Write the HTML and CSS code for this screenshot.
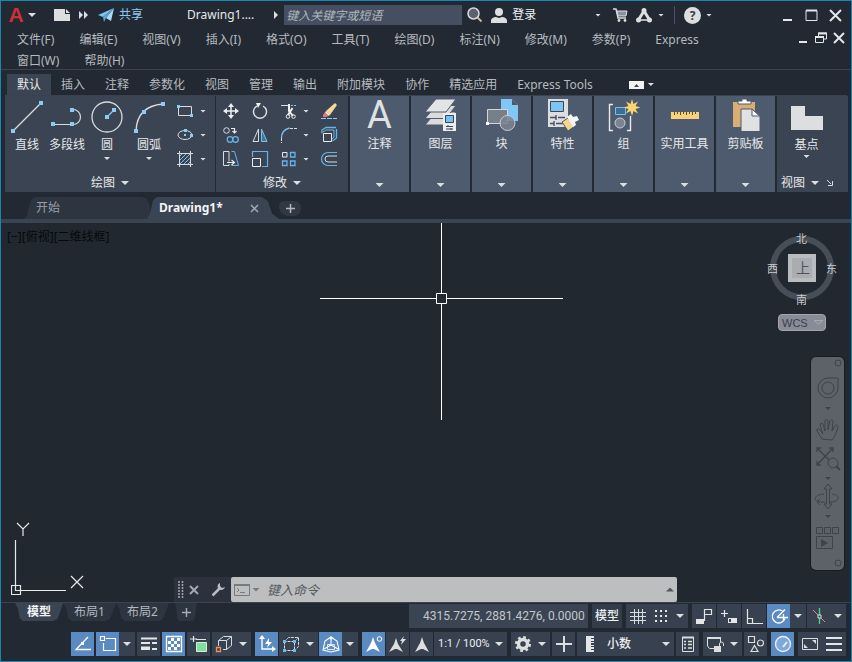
FILE: index.html
```html
<!DOCTYPE html>
<html lang="zh-CN">
<head>
<meta charset="utf-8">
<title>Drawing1</title>
<link rel="stylesheet" href="styles.css">
</head>
<body>
<div class="app">
  <header class="titlebar">
    <button class="logo" aria-label="应用程序">A</button>
    <i class="caret"></i>
    <button class="icon-btn new-doc" aria-label="新建"><svg width="16" height="12" viewBox="0 0 16 12"><path fill="#dcdee0" d="M0 0h11v5h5v7H0z"/><path fill="#dcdee0" d="M12 0l4 4h-4z"/></svg></button>
    <button class="icon-btn more" aria-label="更多"><svg width="10" height="8" viewBox="0 0 10 8"><path fill="#dcdee0" d="M0 0l4 4-4 4zM5 0l4 4-4 4z"/></svg></button>
    <button class="share"><svg width="17" height="14" viewBox="0 0 17 14"><path fill="#7cc3f2" d="M0 7L16 0 5 9z"/><path fill="#a9dbfb" d="M16 0l-3 13-5-3z"/><path fill="#5aa6dc" d="M5 9L16 0 8 10l-2 4z"/></svg>共享</button>
    <h1 class="doc-title">Drawing1....</h1>
    <svg class="title-arrow" width="5" height="8" viewBox="0 0 5 8"><path fill="#dcdee0" d="M0 0l4 4-4 4z"/></svg>
    <input class="search" type="text" aria-label="搜索" placeholder="键入关键字或短语">
    <button class="icon-btn lens" aria-label="搜索"><svg width="16" height="16" viewBox="0 0 16 16"><circle cx="6.500" cy="6.500" r="5.500" fill="#5b626c" stroke="#d8dadc" stroke-width="1.500"/><path d="M10.500 10.500l4 4" stroke="#c9b79c" stroke-width="2"/></svg></button>
    <button class="login"><svg width="16" height="15" viewBox="0 0 16 15"><circle cx="8" cy="4" r="4" fill="#dcdee0"/><path fill="#dcdee0" d="M0 15v-2c0-3 3-4 5-4l3 1 3-1c2 0 5 1 5 4v2z"/></svg>登录</button>
    <span class="spacer"></span>
    <i class="caret small"></i>
    <button class="icon-btn cart" aria-label="商店"><svg width="15" height="14" viewBox="0 0 15 14"><path d="M0 1h3l2 9h8" fill="none" stroke="#dcdee0" stroke-width="1.400"/><path fill="#8d9298" stroke="#dcdee0" d="M4 3h10l-1 5H5z"/><circle cx="6" cy="12.500" r="1.400" fill="#dcdee0"/><circle cx="12" cy="12.500" r="1.400" fill="#dcdee0"/></svg></button>
    <button class="icon-btn desk" aria-label="应用商店"><svg width="16" height="15" viewBox="0 0 16 15"><path d="M3 11L8 3l5 8" fill="none" stroke="#dcdee0" stroke-width="3"/><path d="M3 12h10" stroke="#dcdee0" stroke-width="1.500"/><circle cx="8" cy="2.500" r="2.500" fill="#dcdee0"/><circle cx="2.500" cy="12" r="2.500" fill="#dcdee0"/><circle cx="13.500" cy="12" r="2.500" fill="#dcdee0"/></svg></button>
    <i class="caret small"></i>
    <i class="divider"></i>
    <button class="help" aria-label="帮助">?</button>
    <i class="caret small"></i>
    <div class="win-controls">
      <button aria-label="最小化"><svg width="13" height="13" viewBox="0 0 13 13"><path d="M2 11h9" stroke="#e4e6e8" stroke-width="2"/></svg></button>
      <button aria-label="最大化"><svg width="13" height="13" viewBox="0 0 13 13"><path d="M1 1.500h11v10H1z" fill="none" stroke="#e4e6e8"/><path d="M1 1.500h11" stroke="#e4e6e8" stroke-width="2"/></svg></button>
      <button aria-label="关闭"><svg width="13" height="13" viewBox="0 0 13 13"><path d="M1 1l11 11M12 1L1 12" stroke="#e4e6e8" stroke-width="2"/></svg></button>
    </div>
  </header>

  <nav class="menubar" aria-label="菜单">
    <div class="menus">
      <div class="menu-row"><a href="#">文件(F)</a><a href="#">编辑(E)</a><a href="#">视图(V)</a><a href="#">插入(I)</a><a href="#">格式(O)</a><a href="#">工具(T)</a><a href="#">绘图(D)</a><a href="#">标注(N)</a><a href="#">修改(M)</a><a href="#">参数(P)</a><a href="#">Express</a></div>
      <div class="menu-row"><a href="#">窗口(W)</a><a href="#">帮助(H)</a></div>
    </div>
    <div class="doc-controls">
      <button aria-label="最小化图形"><svg width="12" height="12" viewBox="0 0 12 12"><path d="M2 10h8" stroke="#e4e6e8" stroke-width="2"/></svg></button>
      <button aria-label="还原图形"><svg width="12" height="12" viewBox="0 0 12 12"><path d="M3.500 4V1h8v6H9M.500 4.500h8v6h-8z" fill="none" stroke="#e4e6e8"/><path d="M3 1.500h9M0 5h9" stroke="#e4e6e8" stroke-width="2"/></svg></button>
      <button aria-label="关闭图形"><svg width="12" height="12" viewBox="0 0 12 12"><path d="M1 1l10 10M11 1L1 11" stroke="#e4e6e8" stroke-width="2"/></svg></button>
    </div>
  </nav>

  <nav class="ribbon-tabs" aria-label="功能区">
    <button class="on">默认</button><button>插入</button><button>注释</button><button>参数化</button><button>视图</button><button>管理</button><button>输出</button><button>附加模块</button><button>协作</button><button>精选应用</button><button>Express Tools</button>
    <button class="collapse" aria-label="最小化功能区"><svg width="15" height="8" viewBox="0 0 15 8"><path fill="#f2f2f2" d="M0 0h15v8H0z"/><path fill="#3b4453" d="M5 6l2.500-3L10 6z"/></svg><i class="caret small"></i></button>
  </nav>

  <section class="ribbon">
    <div class="panel draw">
      <div class="tools">
        <button class="tool"><svg width="34" height="34" viewBox="0 0 34 34"><path d="M3 31L31 3" stroke="#d9dcdf" stroke-width="1.200"/><path fill="#8ccbf5" d="M1 29h4v4H1zM29 1h4v4h-4z"/></svg>直线</button>
        <button class="tool"><svg width="34" height="34" viewBox="0 0 34 34"><path d="M3 24.500h20M23 9.500a7.500 7.500 0 0 1 0 15" fill="none" stroke="#d9dcdf" stroke-width="1.200"/><path fill="#8ccbf5" d="M1 22h4v4H1zM20 22h4v4h-4zM20 8h4v4h-4z"/></svg>多段线</button>
        <button class="tool"><svg width="34" height="34" viewBox="0 0 34 34"><circle cx="17" cy="17" r="15" fill="none" stroke="#d9dcdf" stroke-width="1.300"/><path d="M17 17l6-6" stroke="#8ccbf5" stroke-width="1.200"/><path fill="#8ccbf5" d="M15 15h4v4h-4zM22 8h4v4h-4z"/></svg>圆<i class="caret small"></i></button>
        <button class="tool last"><svg width="34" height="34" viewBox="0 0 34 34"><path d="M4 31Q5 6 31 4" fill="none" stroke="#d9dcdf" stroke-width="1.300"/><path fill="#8ccbf5" d="M2 29h4v4H2zM29 2h4v4h-4zM10 10h4v4h-4z"/></svg>圆弧<i class="caret small"></i></button>
        <div class="mini-draw">
          <button aria-label="矩形"><svg width="18" height="18" viewBox="0 0 18 18"><path d="M2.500 4.500h13v9h-13z" fill="none" stroke="#d9dcdf"/><path fill="#8ccbf5" d="M1 3h3v3H1zM14 12h3v3h-3z"/></svg><i class="caret small"></i></button>
          <button aria-label="椭圆"><svg width="18" height="18" viewBox="0 0 18 18"><ellipse cx="9" cy="9" rx="7" ry="4.500" fill="none" stroke="#d9dcdf"/><path fill="#8ccbf5" d="M8 8h2v2H8zM8 3h3v3H8zM14 8h3v3h-3z"/></svg><i class="caret small"></i></button>
          <button aria-label="图案填充"><svg width="18" height="18" viewBox="0 0 18 18"><path d="M4 6l2-2M4 10l6-6M4 14L14 4M8 14l6-6M12 14l2-2" stroke="#7fc0ee"/><path d="M3.500 1v16M14.500 1v16M1 3.500h16M1 14.500h16" stroke="#d9dcdf"/></svg><i class="caret small"></i></button>
        </div>
      </div>
      <button class="panel-label">绘图<i class="caret"></i></button>
    </div>

    <div class="panel modify">
      <div class="mini-modify">
        <button aria-label="移动"><svg width="18" height="18" viewBox="0 0 18 18"><path d="M9 3v12M3 9h12" stroke="#eef0f1" stroke-width="1.500"/><path fill="#eef0f1" d="M9 1l3 4H6zM9 17l-3-4h6zM1 9l4-3v6zM17 9l-4 3V6z"/></svg></button>
        <button aria-label="旋转"><svg width="18" height="18" viewBox="0 0 18 18"><path d="M6 4a6.500 6.500 0 1 0 6 0" fill="none" stroke="#dfe1e3" stroke-width="1.400"/><path fill="#eef0f1" d="M5 1h5l-3 5z"/></svg></button>
        <button aria-label="修剪"><svg width="18" height="18" viewBox="0 0 18 18"><path d="M1 3.500h7" stroke="#d9dcdf"/><path d="M11 3.500h6" stroke="#7fc0ee" stroke-dasharray="2 1"/><path d="M9 2v7l4 5M12.500 6L8 13" stroke="#eef0f1" stroke-width="2" fill="none"/><circle cx="8" cy="14.500" r="1.800" fill="none" stroke="#eef0f1"/><circle cx="13.500" cy="14.500" r="1.800" fill="none" stroke="#eef0f1"/></svg></button>
        <i class="caret small"></i>
        <button aria-label="删除"><svg width="18" height="18" viewBox="0 0 18 18"><path d="M1 16.500h16" stroke="#8ccbf5" stroke-dasharray="5 1"/><path fill="#f7d793" d="M15 1l2 2-7 10-4-4z"/><path fill="#fff" d="M6 9l4 4-2 1-3-3z"/><path fill="#e87878" d="M5 10l4 4-3 1H3v-2z"/></svg></button>

        <button aria-label="复制"><svg width="18" height="18" viewBox="0 0 18 18"><circle cx="4.500" cy="4.500" r="2.800" fill="none" stroke="#d9dcdf"/><path d="M9 2.500h3.500V6M10.500 5l2 2 2-2" fill="none" stroke="#e8eaeb" stroke-width="1.200"/><circle cx="8" cy="13.500" r="2.800" fill="none" stroke="#66b3ea" stroke-width="1.300"/><circle cx="13.500" cy="13.500" r="2.800" fill="none" stroke="#66b3ea" stroke-width="1.300"/></svg></button>
        <button aria-label="镜像"><svg width="18" height="18" viewBox="0 0 18 18"><path d="M7.500 3v12.500H2z" fill="none" stroke="#d9dcdf"/><path d="M10.500 3v12.500H16z" fill="#3d75a3" stroke="#7fc0ee"/></svg></button>
        <button aria-label="圆角"><svg width="18" height="18" viewBox="0 0 18 18"><path d="M1.500 12q0-8 8-10" fill="none" stroke="#7fc0ee" stroke-width="1.300"/><path d="M1.500 12v5M10 2.500h7" stroke="#d9dcdf" stroke-dasharray="3 1"/></svg></button>
        <i class="caret small"></i>
        <button aria-label="分解"><svg width="18" height="18" viewBox="0 0 18 18"><path d="M2 7.500V4l4-2.500h10M16.500 3v9l-4 3" fill="none" stroke="#66b3ea" stroke-width="1.300"/><path d="M3 6l3-2h8v7l-2 2" fill="none" stroke="#66b3ea"/><path d="M3.500 7.500h8v8h-8z" fill="#3b4453" stroke="#e8eaeb"/></svg></button>

        <button aria-label="拉伸"><svg width="18" height="18" viewBox="0 0 18 18"><path d="M7 11.500V1.500H1.500v14H7V14" fill="none" stroke="#d9dcdf"/><path d="M9.500 1.500h3l4 14H9.500" fill="none" stroke="#66b3ea"/><path d="M5 12.500h7M9.500 10l3 2.500-3 2.500" fill="none" stroke="#e8eaeb" stroke-width="1.200"/></svg></button>
        <button aria-label="缩放"><svg width="18" height="18" viewBox="0 0 18 18"><path d="M1.500 7V1.500h15v15H11" fill="none" stroke="#66b3ea" stroke-width="1.200"/><path d="M1.500 8.500h8v8h-8z" fill="none" stroke="#e8eaeb"/></svg></button>
        <button aria-label="阵列"><svg width="18" height="18" viewBox="0 0 18 18"><path d="M2.500 2.500h4.500V7H2.500z" fill="none" stroke="#e8eaeb"/><path d="M10.500 2.500H15V7h-4.500zM2.500 11H7v4.500H2.500zM10.500 11H15v4.500h-4.500z" fill="none" stroke="#66b3ea" stroke-width="1.300"/></svg></button>
        <i class="caret small"></i>
        <button aria-label="偏移"><svg width="18" height="18" viewBox="0 0 18 18"><path d="M17 2.500H8a6.500 6.500 0 0 0 0 13h9" fill="none" stroke="#66b3ea" stroke-width="1.200"/><path d="M17 6H8a3 3 0 0 0 0 6h9" fill="none" stroke="#d9dcdf"/></svg></button>
      </div>
      <button class="panel-label">修改<i class="caret"></i></button>
    </div>

    <button class="block"><span class="letter">A</span>注释<i class="caret"></i></button>
    <button class="block"><svg width="34" height="34" viewBox="0 0 34 34"><path fill="#d9dbdd" stroke="#4e5a6d" d="M12 14h20L22 27H1z"/><path fill="#d9dbdd" stroke="#4e5a6d" d="M12 7.500h20L22 20.500H1z"/><path fill="#e2e4e5" stroke="#4e5a6d" d="M12 1h20L22 14H1z"/><path fill="#eceeee" d="M19 15h13v18H19z"/><path fill="#76c0f3" stroke="#3b4453" d="M21.500 17.500h8v7h-8z"/><path d="M22 28.500h7M22 31h7M24 27v2M27 30v2" stroke="#3b4453"/></svg>图层<i class="caret"></i></button>
    <button class="block"><svg width="34" height="34" viewBox="0 0 34 34"><path fill="#80c7f7" d="M16 1h11l6 6v16H16z"/><path fill="#4e5a6d" d="M27 1l6 6h-6z"/><path d="M2.500 11.500h20v14h-20z" fill="#777f8a" stroke="#d4d7da"/><circle cx="22.500" cy="25" r="7.500" fill="#7b8490" fill-opacity=".85" stroke="#c9cdd1"/><path fill="#fff" d="M1 24h3v3H1z"/></svg>块<i class="caret"></i></button>
    <button class="block"><svg width="34" height="34" viewBox="0 0 34 34"><path fill="#dcdedf" d="M2 1h20v28H2z"/><path fill="#7cc5f5" stroke="#3d4856" d="M4.500 3.500h13v10h-13z"/><path d="M4 19.500h6M12 19.500h7M4 25.500h4M10 25.500h7M10 17v5M8 23v5" stroke="#4a5360" stroke-width="1.400"/><path fill="#f7d58b" stroke="#4e5a6d" d="M16 24l6-4 7 8-7 5z"/><path fill="#f4f5f5" d="M21 19l4-3 2 3 4-1 2 4-4 2 1 3-3 2z"/></svg>特性<i class="caret"></i></button>
    <button class="block"><svg width="34" height="34" viewBox="0 0 34 34"><path d="M6 6.500H2.500v26H6M20 32.500h3.500V18" fill="none" stroke="#e8eaeb" stroke-width="1.400"/><path d="M8.500 9.500h10v7h-10z" fill="#3e6e94" stroke="#79bfee"/><circle cx="13" cy="25" r="5" fill="#7b8490" stroke="#c9cdd1"/><path fill="#fbd56f" d="M25 1l1.500 5 4.500-2.500-2.500 4.500 5 1.500-5 1.500 2.500 4.500-4.500-2.500-1.500 5-1.500-5-4.500 2.500 2.500-4.500-5-1.500 5-1.500-2.500-4.500 4.500 2.500z"/></svg>组<i class="caret"></i></button>
    <button class="block"><svg width="34" height="34" viewBox="0 0 34 34"><path fill="#f7d27c" d="M3 14h28v7H3z"/><path d="M6.500 14v3M9.500 14v2M12.500 14v3M15.500 14v2M18.500 14v3M21.500 14v2M24.500 14v3M27.500 14v2" stroke="#5d4d2c"/></svg>实用工具<i class="caret"></i></button>
    <button class="block"><svg width="34" height="34" viewBox="0 0 34 34"><path fill="#d9ae74" d="M4 4h22v25H4z"/><path fill="#fff" stroke="#4e5a6d" d="M9 6V3h4V1h5v2h4v3z"/><path fill="#dfe1e2" stroke="#4e5a6d" d="M12 11h11l8 7v15.500H12z"/><path fill="#fff" stroke="#4e5a6d" d="M23 11l7.500 7H23z"/></svg>剪贴板<i class="caret"></i></button>

    <div class="panel base">
      <button class="tool"><svg width="34" height="34" viewBox="0 0 34 34"><path fill="#dcdedf" d="M1 6h14v10h18v14H1z"/></svg>基点<i class="caret small"></i></button>
      <button class="panel-label">视图<i class="caret"></i><svg class="launcher" width="6" height="6" viewBox="0 0 6 6"><path d="M0 0l4 4M5.500 1v4.500H1" fill="none" stroke="#dcdee0"/></svg></button>
    </div>
  </section>

  <nav class="file-tabs" aria-label="图形">
    <button class="file-tab">开始</button>
    <button class="file-tab current">Drawing1*<svg width="9" height="9" viewBox="0 0 9 9"><path d="M1 1l7 7M8 1L1 8" stroke="#a6abb3" stroke-width="1.500"/></svg></button>
    <button class="add-tab" aria-label="新图形"><svg width="9" height="9" viewBox="0 0 9 9"><path d="M4.500 0v9M0 4.500h9" stroke="#b4b8be" stroke-width="1.500"/></svg></button>
  </nav>

  <main class="canvas">
    <div class="view-label">[−][俯视][二维线框]</div>
    <svg class="crosshair" width="244" height="197" viewBox="0 0 244 197"><path d="M121.500 0v70M121.500 81v116M0 75.500h116M127 75.500h116M116.500 70.500h10v10h-10z" fill="none" stroke="#fff"/></svg>
    <svg class="ucs" width="76" height="78" viewBox="0 0 76 78"><path d="M.500 63.500h9v9h-9zM4.500 18v50.500H55M6 1l6 6 6-6M12 7v7M60 54l12 12M72 54L60 66" fill="none" stroke="#e6e8ea" stroke-width="1.200"/></svg>

    <div class="viewcube">
      <svg width="72" height="72" viewBox="0 0 72 72"><circle cx="36" cy="36" r="29" fill="none" stroke="#474e57" stroke-width="6"/><path fill="#b9bcbe" d="M22 22h28v28H22z"/><path fill="#a9adb0" d="M26 26h20v20H26z"/></svg>
      <span class="north">北</span><span class="west">西</span><span class="east">东</span><span class="south">南</span><span class="top">上</span>
    </div>
    <button class="wcs">WCS<svg width="9" height="5" viewBox="0 0 9 5"><path d="M0 .500h9L4.500 4z" fill="none" stroke="#a6a9b2"/></svg></button>

    <div class="navbar">
      <svg width="33" height="213" viewBox="0 0 33 213"><g fill="none" stroke="#3d434a"><circle cx="27" cy="6" r="3"/><path d="M17 21h10v10a10 10 0 1 1-10-10z"/><circle cx="17" cy="31" r="6"/><path d="M11 82l-5-8c-1-2 1-3 3-1l3 4-3-9c0-2 2-2 3-1l2 7V64c0-2 3-2 3 0v9l2-9c1-2 3-1 3 1l-1 9 3-5c1-2 3-1 3 1-2 6-3 10-6 13z"/><path stroke-width="1.300" d="M6 91l18 18M22 91L6 108M6 95v-4h4M18 91h4v4M6 104v4h4"/><circle cx="22" cy="106" r="5" fill="#5c6268"/><path stroke-width="2" d="M25 109l4 4"/><path d="M17 127l-4 5h2.500v15H13l4 5 4-5h-2.500v-15H21zM13 137c-11 1-11 7-4 8h5M19 145c10 0 11-7 2-8M9 142l-3 3 3 3"/><path d="M5.500 170.500h6v6h-6zM13.500 170.500h6v6h-6zM21.500 170.500h6v6h-6zM5.500 179.500h16v12h-16z"/><circle cx="27" cy="206" r="3"/></g><path fill="#3d434a" d="M14 50h6l-3 3zM14 120h6l-3 3zM14 158h6l-3 3zM10 182l7 4-7 4z"/></svg>
    </div>

    <div class="command">
      <div class="handle">
        <svg width="6" height="18" viewBox="0 0 6 18"><path d="M1 0v18M4.500 0v18" stroke="#a4a8ae" stroke-width="1.500" stroke-dasharray="2 1"/></svg>
        <button class="icon-btn" aria-label="关闭命令行"><svg width="10" height="10" viewBox="0 0 10 10"><path d="M1 1l8 8M9 1L1 9" stroke="#a4a8ae" stroke-width="2"/></svg></button>
        <button class="icon-btn wrench" aria-label="自定义"><svg width="14" height="14" viewBox="0 0 14 14"><path d="M1.500 12.500L9 5" stroke="#b9bcc1" stroke-width="2.500"/><path d="M9 0C6 1 6 5 8 6c2 2 5 1 6-2l-3 1-2-2z" fill="#b9bcc1"/></svg></button>
      </div>
      <div class="entry">
        <svg width="16" height="12" viewBox="0 0 16 12"><path d="M.500 .500h15v11H.500z" fill="none" stroke="#777b80"/><path fill="#777b80" d="M0 0h16v2H0z"/><path d="M3 4l2 2-2 2M6 8.500h5" fill="none" stroke="#777b80"/></svg>
        <i class="caret dim"></i>
        <input type="text" aria-label="命令" placeholder="键入命令">
        <i class="caret up"></i>
      </div>
    </div>
  </main>

  <footer class="footer">
    <div class="status-top">
      <nav class="layouts" aria-label="布局"><button class="on">模型</button><button>布局1</button><button>布局2</button><button class="plus" aria-label="新建布局"><svg width="9" height="9" viewBox="0 0 9 9"><path d="M4.500 0v9M0 4.500h9" stroke="#a6abb3" stroke-width="1.500"/></svg></button></nav>
      <div class="status">
        <output class="coords">4315.7275, 2881.4276, 0.0000</output>
        <button class="model">模型</button>
        <div class="cluster flush">
          <button class="sb" aria-label="栅格"><svg width="18" height="18" viewBox="0 0 18 18"><path d="M5.500 2v15M9.500 2v15M13.500 2v15M1 5.500h16M1 9.500h16M1 13.500h16" stroke="#d9dcdf"/></svg></button>
          <button class="sb" aria-label="捕捉"><svg width="18" height="18" viewBox="0 0 18 18"><path d="M3 4h14M3 9h14M3 14h14" stroke="#e4e6e8" stroke-width="2" stroke-dasharray="2 3"/></svg></button>
          <button class="sc" aria-label="捕捉选项"><i class="caret"></i></button>
        </div>
        <div class="cluster tight">
          <button class="sb wide" aria-label="推断约束"><svg width="18" height="18" viewBox="0 0 18 18"><path d="M9.500 14V2.500h7v5h-7" fill="none" stroke="#e4e6e8" stroke-width="1.200"/><path fill="#e4e6e8" d="M1 12h8v5H1z"/></svg></button>
          <button class="sb wide" aria-label="动态输入"><svg width="18" height="18" viewBox="0 0 18 18"><path d="M4.500 3v7M1 6.500h7" stroke="#e4e6e8" stroke-width="1.200"/><path fill="#e4e6e8" d="M8 11h9v5H8z"/><path fill="#3b4453" d="M9 12h2v3H9z"/></svg></button>
          <button class="sb wide" aria-label="正交"><svg width="18" height="18" viewBox="0 0 18 18"><path d="M2.500 2v14.500H18M2.500 11.500h5v5" fill="none" stroke="#e4e6e8" stroke-width="1.200"/></svg></button>
          <div class="group"><button class="sb active" aria-label="极轴追踪"><svg width="18" height="18" viewBox="0 0 18 18"><path d="M13 4.500a6.500 6.500 0 1 0 2 7M7 10.500h11M7 10.500l8-8M13.500 7v6" fill="none" stroke="#fff" stroke-width="1.300"/></svg></button><button class="sc" aria-label="极轴选项"><i class="caret"></i></button></div>
          <div class="group"><button class="sb" aria-label="等轴测"><svg width="18" height="18" viewBox="0 0 18 18"><path d="M3 3l12 12" stroke="#dc8d8d"/><path d="M9.500 1v16" stroke="#55c883" stroke-width="1.400"/><path fill="#3b4453" stroke="#dcdee0" d="M8 8h3v3H8z"/></svg></button><button class="sc" aria-label="等轴测选项"><i class="caret"></i></button></div>
        </div>
      </div>
    </div>
    <div class="status status-bottom">
      <div class="cluster">
        <button class="sb active" aria-label="对象捕捉追踪"><svg width="18" height="18" viewBox="0 0 18 18"><path d="M14 2L2 14.500h15" fill="none" stroke="#fff" stroke-width="1.300"/><path fill="#fff" d="M7 7h3v3H7z"/></svg></button>
        <div class="group"><button class="sb active" aria-label="对象捕捉"><svg width="18" height="18" viewBox="0 0 18 18"><path d="M7 3.500h9.500v12h-12V8M1.500 1.500h4v4h-4z" fill="none" stroke="#fff" stroke-width="1.200"/></svg></button><button class="sc" aria-label="对象捕捉选项"><i class="caret"></i></button></div>
        <button class="sb" aria-label="线宽"><svg width="18" height="18" viewBox="0 0 18 18"><path d="M1 3.500h16M1 8h9M12 8h5M1 14h9M12 14h5" stroke="#e4e6e8" stroke-width="2"/><path d="M1 13h9" stroke="#e4e6e8" stroke-width="3"/></svg></button>
        <button class="sb active" aria-label="透明度"><svg width="18" height="18" viewBox="0 0 18 18"><path d="M1.500 1.500h15v15h-15z" fill="none" stroke="#fff" stroke-width="1.300"/><path fill="#fff" d="M6 3h3v3H6zM12 3h3v3h-3zM3 6h3v3H3zM9 6h3v3H9zM6 9h3v3H6zM12 9h3v3h-3zM3 12h3v3H3zM9 12h3v3H9z"/></svg></button>
        <button class="sb" aria-label="选择循环"><svg width="18" height="18" viewBox="0 0 18 18"><path d="M3.500 1v6M0 4h7M6 4.500h10" stroke="#e4e6e8" stroke-width="1.200"/><path fill="#7fe09a" stroke="#dbe7df" d="M6.500 7.500h10v9h-10z"/></svg></button>
        <div class="group"><button class="sb" aria-label="三维对象捕捉"><svg width="18" height="18" viewBox="0 0 18 18"><path d="M3.500 11V5.500l5-4h8v9l-5 4H8M3.500 5.500h8v9M11.500 5.500l5-4" fill="none" stroke="#d9dcdf"/><path d="M1.500 12.500h4v4h-4z" fill="none" stroke="#ee8f60" stroke-width="1.300"/></svg></button><button class="sc" aria-label="三维捕捉选项"><i class="caret"></i></button></div>
      </div>
      <div class="cluster tight">
        <button class="sb active" aria-label="动态UCS"><svg width="18" height="18" viewBox="0 0 18 18"><path d="M4 3v11h12" fill="none" stroke="#fff" stroke-width="1.400"/><path fill="#fff" d="M4 0l3 4H1zM18 14l-4 3v-6zM11 3L7 9h3l-1 4 5-6h-3z"/></svg></button>
        <div class="group"><button class="sb" aria-label="选择过滤"><svg width="18" height="18" viewBox="0 0 18 18"><path d="M2.500 6.500v9h10v-9zM2.500 6.500l4-4h10v9l-4 4M12.500 6.500l4-4" fill="none" stroke="#d9dcdf" stroke-dasharray="3 1"/><path fill="#70b8ec" d="M1 5h3v3H1zM11 5h3v3h-3zM1 14h3v3H1zM11 14h3v3h-3z"/></svg></button><button class="sc" aria-label="过滤选项"><i class="caret"></i></button></div>
        <div class="group"><button class="sb active" aria-label="小控件"><svg width="18" height="18" viewBox="0 0 18 18"><path d="M9 2l6 4 2 9-8 2-8-2 2-9zM9 3v7M9 10l-7 4M9 10l7 4" fill="none" stroke="#fff" stroke-width="1.100"/><circle cx="9" cy="3" r="1.500" fill="#fff"/><path d="M5.500 9.500h7v5h-7z" fill="none" stroke="#dfeaf6"/></svg></button><button class="sc" aria-label="小控件选项"><i class="caret"></i></button></div>
      </div>
      <div class="cluster tight">
        <button class="sb active" aria-label="注释可见性"><svg width="18" height="18" viewBox="0 0 18 18"><path fill="#fff" d="M8 2l2 6 5 9-6-3H7l-6 3 5-9z"/><circle cx="14.500" cy="4" r="2.300" fill="none" stroke="#fff"/></svg></button>
        <button class="sb" aria-label="自动缩放"><svg width="18" height="18" viewBox="0 0 18 18"><path fill="#dcdee0" d="M7 3l2 6 5 8-6-3H6l-6 3 5-8zM15 1l-4 5h2l-1 4 5-6h-3z"/></svg></button>
        <button class="sb" aria-label="注释比例"><svg width="18" height="18" viewBox="0 0 18 18"><path fill="#dcdee0" d="M9 2l2 6 5 9-6-3H8l-6 3 5-9z"/></svg></button>
        <div class="pick scale"><select aria-label="视图比例"><option>1:1 / 100%</option></select><i class="caret"></i></div>
      </div>
      <div class="cluster">
        <div class="group"><button class="sb" aria-label="切换工作空间"><svg width="18" height="18" viewBox="0 0 18 18"><circle cx="9" cy="9" r="4.500" fill="none" stroke="#dcdee0" stroke-width="3.500"/><circle cx="9" cy="9" r="6.800" fill="none" stroke="#dcdee0" stroke-width="2.500" stroke-dasharray="2.700 2.640"/></svg></button><button class="sc" aria-label="工作空间选项"><i class="caret"></i></button></div>
        <button class="sb" aria-label="注释监视器"><svg width="18" height="18" viewBox="0 0 18 18"><path d="M9 1v16M1 9h16" stroke="#dcdee0" stroke-width="2"/></svg></button>
        <div class="pick units"><svg width="8" height="16" viewBox="0 0 8 16"><path fill="#e4e6e8" d="M0 0h8v2H5v1h3v2H5v1h3v1H5v2h3v1H5v1h3v2H5v1h3v2H0z"/></svg><select aria-label="单位"><option>小数</option></select><i class="caret"></i></div>
        <button class="sb" aria-label="快捷特性"><svg width="18" height="18" viewBox="0 0 18 18"><path d="M3.500 2v14.500h11V2" fill="none" stroke="#dcdee0"/><path d="M3 2.500h12" stroke="#dcdee0" stroke-width="2"/><path d="M5 6.500h2M9 6.500h4M5 9.500h2M9 9.500h4M5 13h2M9 13h4" stroke="#dcdee0" stroke-width="1.400"/></svg></button>
      </div>
      <div class="cluster">
        <div class="group"><button class="sb" aria-label="锁定用户界面"><svg width="18" height="18" viewBox="0 0 18 18"><path d="M8 13.500H3.500L1.500 11V2.500h13V7" fill="none" stroke="#dcdee0"/><path d="M1 3h14" stroke="#dcdee0" stroke-width="2"/><path fill="#dcdee0" d="M8 11h7v6H8z"/><path d="M13.500 11V9a2 2 0 0 1 4 0v2" fill="none" stroke="#dcdee0"/></svg></button><button class="sc" aria-label="锁定选项"><i class="caret"></i></button></div>
        <button class="sb" aria-label="隔离对象"><svg width="18" height="18" viewBox="0 0 18 18"><path d="M1.500 1.500h6v6h-6zM7.500 10.500l3.500 6H4z" fill="none" stroke="#dcdee0" stroke-width="1.200"/><circle cx="13.500" cy="8" r="3" fill="none" stroke="#dcdee0" stroke-width="1.200"/></svg></button>
      </div>
      <button class="sb active" aria-label="图形性能"><svg width="18" height="18" viewBox="0 0 18 18"><circle cx="9" cy="9" r="7.500" fill="#7da8da" stroke="#e6effa" stroke-width="1.400"/><path d="M9 12l4-5" stroke="#e6effa" stroke-width="2"/></svg></button>
      <div class="cluster flush">
        <button class="sb wide" aria-label="全屏显示"><svg width="18" height="18" viewBox="0 0 18 18"><path d="M1.500 3.500h15v11h-15z" fill="none" stroke="#dcdee0"/><path fill="#dcdee0" d="M11 5h4v4zM7 13H3V9z"/></svg></button>
        <button class="sb wide" aria-label="自定义"><svg width="18" height="18" viewBox="0 0 18 18"><path d="M1 3h16M1 9h16M1 15h16" stroke="#e4e6e8" stroke-width="2"/></svg></button>
      </div>
    </div>
  </footer>
</div>
</body>
</html>
```
FILE: styles.css
```css
:root {
  --bg: #222933;
  --canvas: #212830;
  --panel: #3b4453;
  --block: #4e5a6d;
  --text: #b6babf;
  --bright: #e6e8ea;
  --blue: #5a8ac2;
}

* { box-sizing: border-box; }

body {
  margin: 0;
  background: var(--bg);
  color: var(--text);
  font: 12px/16px "Noto Sans", "Noto Sans CJK SC", sans-serif;
}

button, input, select {
  margin: 0;
  padding: 0;
  border: 0;
  background: none;
  color: inherit;
  font: inherit;
}

a { color: inherit; text-decoration: none; }
svg { display: block; flex: none; }

.app {
  display: flex;
  flex-direction: column;
  min-height: 100vh;
  border: 1px solid #1a86b3;
}

.caret {
  flex: none;
  width: 8px;
  height: 4px;
  background: #dcdee0;
  clip-path: polygon(0 0, 100% 0, 50% 100%);
}
.caret.small { width: 6px; height: 3px; }
.caret.dim { background: #777b80; }
.caret.up { background: #55595e; clip-path: polygon(50% 0, 100% 100%, 0 100%); }

/* Title bar */
.titlebar {
  display: flex;
  align-items: center;
  height: 28px;
  padding: 0 4px 0 7px;
}
.logo {
  width: 16px;
  margin-right: 4px;
  color: #c8323a;
  font: bold 21px/24px "Liberation Sans", sans-serif;
}
.new-doc { margin-left: 18px; }
.more { margin-left: 9px; }
.share {
  display: flex;
  align-items: center;
  gap: 4px;
  margin-left: 9px;
  color: #8ec9f0;
}
.doc-title {
  margin: 0 20px 0 44px;
  color: var(--bright);
  font-size: 12px;
  font-weight: 400;
}
.search {
  flex: 0 1 178px;
  min-width: 60px;
  height: 20px;
  margin-left: 5px;
  padding: 0 2px;
  background: #454f61;
}
.search::placeholder { color: #b2b7bf; font-style: italic; opacity: 1; }
.lens { margin: 0 8px 0 5px; }
.login { display: flex; align-items: center; gap: 5px; color: #f2f3f4; }
.spacer { flex: 1; }
.cart { margin-left: 12px; }
.desk { margin: 0 6px 0 8px; }
.divider { width: 1px; height: 18px; margin: 0 9px 0 10px; background: #4a5360; }
.help {
  width: 17px;
  height: 17px;
  margin-right: 5px;
  border-radius: 50%;
  background: #dcdee0;
  color: #333b47;
  font-weight: 700;
  line-height: 17px;
}
.win-controls { display: flex; margin-left: 63px; }
.win-controls button { display: flex; justify-content: center; width: 24px; }

/* Menu bar */
.menubar {
  display: flex;
  justify-content: space-between;
  height: 41px;
  border-bottom: 1px solid #3c434e;
}
.menu-row { display: flex; gap: 25px; padding-left: 16px; line-height: 21px; white-space: nowrap; }
.doc-controls { display: flex; align-items: center; height: 18px; padding-right: 3px; }
.doc-controls button { display: flex; justify-content: center; width: 18px; }

/* Ribbon tabs */
.ribbon-tabs { display: flex; height: 25px; padding: 4px 0 0 6px; }
.ribbon-tabs button { padding: 0 10px; white-space: nowrap; }
.ribbon-tabs .on { background: var(--panel); color: var(--bright); }
.ribbon-tabs .collapse { display: flex; align-items: center; gap: 4px; padding-left: 26px; }

/* Ribbon */
.ribbon {
  display: flex;
  gap: 2px;
  height: 97px;
  margin: 0 4px;
  border-top: 1px solid #3b424e;
  color: var(--bright);
}
.panel {
  display: flex;
  flex-direction: column;
  justify-content: space-between;
  flex: none;
  background: var(--panel);
}
.draw { width: 210px; }
.modify { width: 132px; margin-left: -1px; }
.base { flex: 1; min-width: 71px; }
.tools { display: flex; padding: 4px 0 0 2px; }
.tool {
  display: flex;
  flex-direction: column;
  align-items: center;
  width: 40px;
  line-height: 21px;
  white-space: nowrap;
}
.tool.last { width: 44px; }
.tool .caret { margin-top: 2px; }
.base .tool { align-self: center; padding-top: 4px; margin-right: 12px; }
.base .tool .caret { margin-top: 0; }
.panel-label {
  display: flex;
  align-items: center;
  justify-content: center;
  gap: 6px;
  line-height: 18px;
}
.base .panel-label { justify-content: flex-start; padding-left: 4px; }
.launcher { margin-left: 2px; }
.mini-draw { margin-top: -1px; padding-left: 5px; }
.mini-draw button { display: flex; align-items: center; gap: 6px; height: 24px; }
.mini-modify {
  display: grid;
  grid-template-columns: 29px 29px 29px 6px 39px;
  grid-auto-rows: 24px;
  align-items: center;
  justify-items: center;
  padding-top: 3px;
}

.block {
  display: flex;
  flex-direction: column;
  align-items: center;
  flex: none;
  width: 59px;
  padding: 2px 0 5px;
  background: var(--block);
  line-height: 24px;
}
.block .caret { margin-top: auto; }
.letter {
  height: 34px;
  color: #dfe1e3;
  font: 38px/34px Roboto, sans-serif;
}

/* Drawing tabs */
.file-tabs {
  display: flex;
  align-items: center;
  height: 31px;
  padding: 5px 0 0 23px;
  border-bottom: 4px solid var(--panel);
}
.file-tab {
  display: flex;
  align-items: center;
  height: 22px;
  width: 126px;
  padding-left: 12px;
  background: #2d3541;
  color: #9a9fa9;
  clip-path: polygon(0 100%, 3px 85%, 6px 20%, 10px 0, 118px 0, 123px 10%, 126px 40%, 126px 100%);
}
.file-tab.current {
  gap: 27px;
  width: 132px;
  margin-left: -3px;
  background: var(--panel);
  color: #f4f5f6;
  font-weight: 700;
  clip-path: polygon(0 100%, 3px 75%, 6px 15%, 10px 0, 115px 0, 121px 20%, 125px 75%, 132px 100%);
}
.add-tab {
  display: flex;
  align-items: center;
  justify-content: center;
  width: 22px;
  height: 15px;
  border-radius: 5px 7px 7px 9px;
  background: #303844;
}

/* Drawing area */
.canvas {
  position: relative;
  flex: 1;
  min-height: 360px;
  background: var(--canvas);
}
.view-label { padding: 6px; color: #05080c; }
.crosshair { position: absolute; left: 319px; top: 0; }
.ucs { position: absolute; left: 10px; bottom: 2px; }
.viewcube { position: absolute; top: 9px; right: 13px; width: 72px; height: 72px; font-size: 11px; line-height: 14px; color: #c9ccd0; }
.viewcube span { position: absolute; }
.north { top: 0; left: 30px; }
.south { bottom: -3px; left: 30px; }
.west { top: 30px; left: 1px; }
.east { top: 30px; right: 1px; }
.top { top: 28px; left: 30px; color: #4e545c; font-size: 14px; line-height: 16px; }
.wcs {
  position: absolute;
  top: 91px;
  right: 25px;
  display: flex;
  align-items: center;
  gap: 6px;
  width: 48px;
  height: 17px;
  padding-left: 3px;
  border: 1px solid #a2a5ae;
  border-radius: 4px;
  background: #888c98;
  color: #383e49;
  font: 11px/14px "Liberation Sans", sans-serif;
}
.navbar {
  position: absolute;
  top: 134px;
  right: 7px;
  border-radius: 5px;
  background: #5c6268;
  box-shadow: 0 0 0 1px #171c22;
}
.command {
  position: absolute;
  right: 174px;
  bottom: 0;
  left: 173px;
  display: flex;
  height: 25px;
}
.handle { display: flex; align-items: center; gap: 5px; width: 57px; padding: 0 6px 0 4px; background: #2b313d; }
.wrench { margin-left: auto; }
.entry {
  display: flex;
  align-items: center;
  flex: 1;
  gap: 2px;
  padding: 0 3px;
  border-radius: 2px;
  background: #bdbebf;
}
.entry input { flex: 1; min-width: 0; padding-left: 5px; color: #333; font-size: 13px; }
.entry input::placeholder { color: #55595e; font-style: italic; opacity: 1; }

/* Status area */
.footer { padding: 1px 5px 5px 0; border-top: 1px solid #3c434e; }
.status-top { display: flex; justify-content: space-between; gap: 8px; }
.layouts { display: flex; padding-left: 14px; margin-top: -1px; }
.layouts button {
  width: 53px;
  height: 18px;
  background: #2d3541;
  clip-path: polygon(0 0, 100% 0, 94% 50%, 88% 90%, 80% 100%, 17% 100%, 10% 85%, 6% 30%);
}
.layouts .on { width: 48px; background: var(--panel); color: #f2f3f4; font-weight: 700; }
.layouts .plus { display: flex; align-items: center; justify-content: center; width: 22px; margin-left: 6px; }
.status { display: flex; gap: 4px; }
.status-bottom { justify-content: flex-end; margin-top: 4px; }
.cluster { display: flex; gap: 2px; }
.cluster.tight { gap: 1px; }
.cluster.flush { gap: 0; }
.group { display: flex; }
.coords {
  width: 179px;
  padding-left: 14px;
  background: var(--panel);
  color: #c3c7cc;
  font: 12px/24px Roboto, sans-serif;
  white-space: nowrap;
}
.model { width: 30px; height: 24px; background: #333c49; color: #eceef0; font-weight: 500; }
.sb, .sc {
  display: flex;
  align-items: center;
  justify-content: center;
  width: 23px;
  height: 24px;
  background: #38414f;
}
.sb.wide { width: 24px; }
.sc { width: 16px; }
.sb.active { background: var(--blue); }
.pick {
  position: relative;
  display: flex;
  align-items: center;
  height: 24px;
  background: #38414f;
  color: #eceef0;
}
.pick select { flex: 1; min-width: 0; appearance: none; }
.pick .caret { position: absolute; right: 4px; pointer-events: none; }
.scale { width: 73px; padding-left: 4px; }
.scale select { font-family: Roboto, sans-serif; font-size: 11px; }
.units { width: 97px; gap: 13px; padding-left: 9px; }
.units select { font-weight: 500; }
```
